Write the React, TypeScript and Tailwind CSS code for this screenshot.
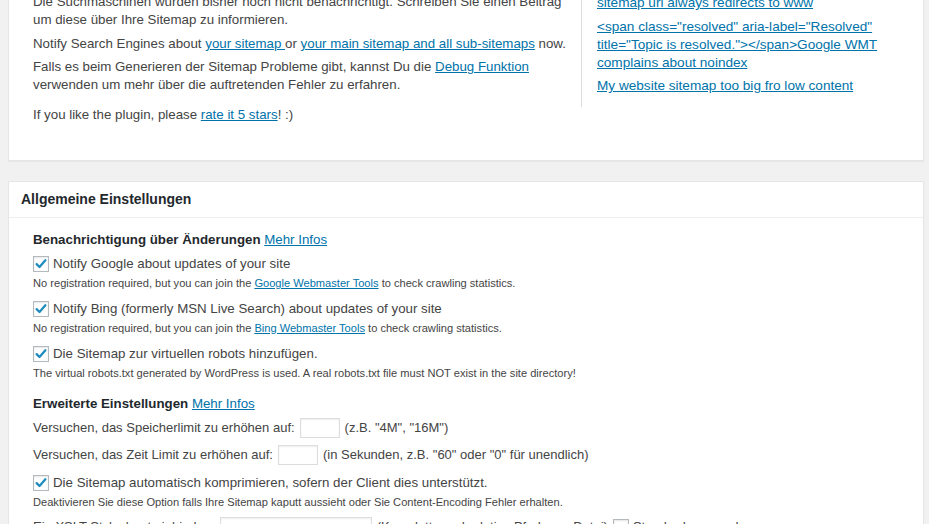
import React from 'react';

function Check({ checked = true }: { checked?: boolean }) {
  return (
    <span className="inline-flex items-center justify-center w-[16px] h-[16px] shrink-0 border border-[#b4b9be] bg-white shadow-[inset_0_1px_2px_rgba(0,0,0,0.1)] mr-[4px]">
      {checked && (
        <svg viewBox="0 0 16 16" className="w-[14px] h-[14px]">
          <path d="M3 8.2 L6.3 11.5 L13 3.8" fill="none" stroke="#1e8cbe" strokeWidth="2.6" strokeLinecap="round" strokeLinejoin="round" />
        </svg>
      )}
    </span>
  );
}

function A({ children }: { children: React.ReactNode }) {
  return <a href="#" className="text-[#0073aa] underline">{children}</a>;
}

function CheckRow({ label, desc }: { label: string; desc: React.ReactNode }) {
  return (
    <div>
      <label className="flex items-center h-[18px] leading-[18px] text-[13.3px]">
        <Check />
        <span>{label}</span>
      </label>
      <p className="mt-[3px] text-[11.1px] leading-[14px]">{desc}</p>
    </div>
  );
}

function SmallInput({ w }: { w: string }) {
  return (
    <input
      type="text"
      className={`${w} h-[20px] mx-[5px] border border-[#ddd] bg-white shadow-[inset_0_1px_2px_rgba(0,0,0,0.07)] outline-none`}
    />
  );
}

export default function App() {
  return (
    <div className="h-[524px] overflow-hidden bg-[#f1f1f1] font-['Liberation_Sans',Arial,sans-serif] text-[13.3px] text-[#444]">
      <div className="ml-[8px] mr-[5px] -mt-[7px]">
        {/* Card: sitemap status (scrolled, top is cut off) */}
        <div className="bg-white border border-t-0 border-[#e5e5e5] shadow-[0_1px_1px_rgba(0,0,0,0.04)] pl-[24px] pb-[36px]">
          <div className="flex items-start leading-[18px]">
            <div className="w-[548px] shrink-0">
              <p>
                Die Suchmaschinen wurden bisher noch nicht benachrichtigt. Schreiben Sie einen Beitrag
                <br />
                um diese über Ihre Sitemap zu informieren.
              </p>
              <p className="mt-[6px]">
                Notify Search Engines about <A>your sitemap </A>or <A>your main sitemap and all sub-sitemaps</A> now.
              </p>
              <p className="mt-[5px]">
                Falls es beim Generieren der Sitemap Probleme gibt, kannst Du die <A>Debug Funktion</A>
                <br />
                verwenden um mehr über die auftretenden Fehler zu erfahren.
              </p>
              <p className="mt-[12px]">
                If you like the plugin, please <A>rate it 5 stars</A>! :)
              </p>
            </div>
            <div className="flex-1 mt-[1px] border-l border-[#ddd] pl-[15px] pr-[20px] pb-[12px] text-[13.6px]">
              <div>
                <A>sitemap url always redirects to www</A>
              </div>
              <div className="mt-[6px]">
                <A>
                  &lt;span class="resolved" aria-label="Resolved"
                  <br />
                  title="Topic is resolved."&gt;&lt;/span&gt;Google WMT
                  <br />
                  complains about noindex
                </A>
              </div>
              <div className="mt-[5px]">
                <A>My website sitemap too big fro low content</A>
              </div>
            </div>
          </div>
        </div>

        {/* Card: general settings */}
        <div className="mt-[20px] bg-white border border-[#e5e5e5] shadow-[0_1px_1px_rgba(0,0,0,0.04)]">
          <div className="h-[36px] flex items-center px-[12px] border-b border-[#eee]">
            <h2 className="text-[14px] font-bold text-[#23282d]">Allgemeine Einstellungen</h2>
          </div>
          <div className="pl-[24px] pt-[13px] pb-[20px]">
            <h4 className="h-[18px] leading-[18px] font-bold text-[#23282d]">
              Benachrichtigung über Änderungen <span className="font-normal"><A>Mehr Infos</A></span>
            </h4>
            <div className="mt-[6px] flex flex-col gap-[10px]">
              <CheckRow
                label="Notify Google about updates of your site"
                desc={<>No registration required, but you can join the <A>Google Webmaster Tools</A> to check crawling statistics.</>}
              />
              <CheckRow
                label="Notify Bing (formerly MSN Live Search) about updates of your site"
                desc={<>No registration required, but you can join the <A>Bing Webmaster Tools</A> to check crawling statistics.</>}
              />
              <CheckRow
                label="Die Sitemap zur virtuellen robots hinzufügen."
                desc="The virtual robots.txt generated by WordPress is used. A real robots.txt file must NOT exist in the site directory!"
              />
            </div>

            <h4 className="mt-[15px] h-[18px] leading-[18px] font-bold text-[#23282d]">
              Erweiterte Einstellungen <span className="font-normal"><A>Mehr Infos</A></span>
            </h4>
            <div className="mt-[5px] flex items-center h-[20px] text-[13px]">
              <span>Versuchen, das Speicherlimit zu erhöhen auf:</span>
              <SmallInput w="w-[40px]" />
              <span>(z.B. "4M", "16M")</span>
            </div>
            <div className="mt-[7px] flex items-center h-[20px] text-[13px]">
              <span>Versuchen, das Zeit Limit zu erhöhen auf:</span>
              <SmallInput w="w-[40px]" />
              <span>(in Sekunden, z.B. "60" oder "0" für unendlich)</span>
            </div>
            <div className="mt-[9px]">
              <CheckRow
                label="Die Sitemap automatisch komprimieren, sofern der Client dies unterstützt."
                desc="Deaktivieren Sie diese Option falls Ihre Sitemap kaputt aussieht oder Sie Content-Encoding Fehler erhalten."
              />
            </div>
            <div className="mt-[8px] flex items-center h-[20px] text-[13px]">
              <span>Ein XSLT Stylesheet einbinden:</span>
              <SmallInput w="w-[152px]" />
              <span>(Komplette und relative Pfade zur Datei)</span>
              <span className="ml-[5px] flex items-center">
                <Check checked={false} />
                <span>Standard verwenden</span>
              </span>
            </div>
          </div>
        </div>
      </div>
    </div>
  );
}
